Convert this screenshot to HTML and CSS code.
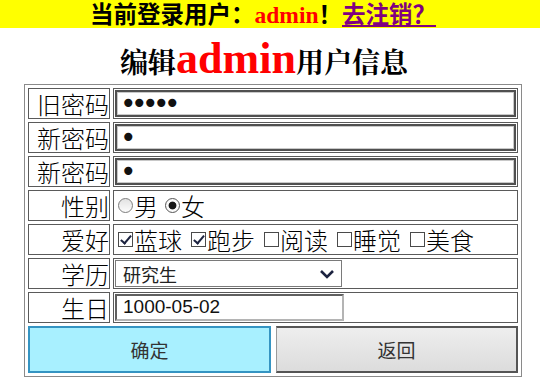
FILE: index.html
```html
<!DOCTYPE html>
<html lang="zh-CN">
<head>
    <meta charset="UTF-8">
    <title>编辑用户信息</title>
    <link rel="stylesheet" href="styles.css">
</head>
<body>
    <!-- 顶部登录信息 -->
    <div class="topbar">当前登录用户：<span class="user">admin</span>！<a href="#" class="logout">去注销？</a></div>

    <h2 class="title">编辑<span class="name">admin</span>用户信息</h2>

    <form class="edit-form" onsubmit="return false;">
        <table class="form-table">
            <tr>
                <td class="label">旧密码</td>
                <td class="field"><input type="password" class="text-box" value="12345"></td>
            </tr>
            <tr>
                <td class="label">新密码</td>
                <td class="field"><input type="password" class="text-box" value="1"></td>
            </tr>
            <tr>
                <td class="label">新密码</td>
                <td class="field"><input type="password" class="text-box" value="1"></td>
            </tr>
            <tr>
                <td class="label">性别</td>
                <td class="field">
                    <div class="choices gender">
                        <label class="opt"><input type="radio" name="sex" value="男">男</label>
                        <label class="opt"><input type="radio" name="sex" value="女" checked>女</label>
                    </div>
                </td>
            </tr>
            <tr>
                <td class="label">爱好</td>
                <td class="field">
                    <div class="choices">
                        <label class="opt"><input type="checkbox" checked>蓝球</label>
                        <label class="opt"><input type="checkbox" checked>跑步</label>
                        <label class="opt"><input type="checkbox">阅读</label>
                        <label class="opt"><input type="checkbox">睡觉</label>
                        <label class="opt"><input type="checkbox">美食</label>
                    </div>
                </td>
            </tr>
            <tr>
                <td class="label">学历</td>
                <td class="field">
                    <div class="select-wrap">
                        <select class="select-box">
                            <option>研究生</option>
                            <option>本科</option>
                            <option>专科</option>
                        </select>
                        <svg class="chevron" viewBox="0 0 16 10" width="16" height="10">
                            <polyline points="2,2 8,8 14,2" fill="none" stroke="#1c2340" stroke-width="2.6"/>
                        </svg>
                    </div>
                </td>
            </tr>
            <tr>
                <td class="label">生日</td>
                <td class="field"><input type="text" class="date-box" value="1000-05-02"></td>
            </tr>
            <tr>
                <td class="btn-cell" colspan="2">
                    <div class="btns">
                        <button type="submit" class="btn btn-ok">确定</button>
                        <button type="button" class="btn btn-back">返回</button>
                    </div>
                </td>
            </tr>
        </table>
    </form>
</body>
</html>
```

FILE: styles.css
```css
* { box-sizing: border-box; }
body { margin: 0; background: #fff; color: #000; font-family: "Noto Sans CJK SC", "Liberation Sans", sans-serif; }

/* Top bar */
.topbar { background: #ffff00; line-height: 27px; text-align: center; padding-right: 14px; font-size: 23.5px; font-weight: bold; white-space: nowrap; }
.topbar .user { color: #ff0000; font-family: "Liberation Serif", serif; line-height: 1; }
.topbar .logout { color: #800080; text-decoration: underline; line-height: 1; }

/* Title */
.title { margin: 0; height: 56px; padding: 9px 12px 0 0; text-align: center; font-family: "Noto Serif CJK SC", "Noto Sans CJK SC", serif; font-size: 28px; font-weight: bold; line-height: 47px; white-space: nowrap; }
.title .name { color: #ff0000; font-family: "Liberation Serif", serif; font-size: 44px; line-height: 1; }

/* Form table */
.form-table { margin-left: 24px; width: 498px; border: 1px solid #8a8a8a; border-spacing: 3px; border-collapse: separate; }
.form-table td { border: 1px solid #5a5a5a; padding: 1px; }
.form-table .label { width: 82px; padding: 0; text-align: right; font-size: 24px; font-weight: 300; line-height: 29px; white-space: nowrap; }

.text-box { display: block; width: 100%; height: 27px; margin: 0; padding: 0 3px; border: 2px solid #505050; box-shadow: inset 0 0 0 1px #c8c8c8; font-family: "DejaVu Sans", sans-serif; font-size: 28px; line-height: 23px; letter-spacing: -5.5px; color: #111; outline: none; }

/* Radio / checkbox rows */
.choices { display: flex; align-items: center; height: 27px; font-size: 24px; font-weight: 300; white-space: nowrap; }
.opt { display: inline-flex; align-items: center; margin-right: 6px; }
.gender .opt { margin-right: 4px; }
.opt input { appearance: none; -webkit-appearance: none; position: relative; flex: none; width: 15px; height: 15px; margin: 0 1px 0 3px; background: #fff; }
.opt input[type=radio] { border: 1px solid #7c7c7c; border-radius: 50%; background: linear-gradient(#e2e2e2, #fcfcfc); }
.opt input[type=radio]:checked { border-color: #555; background: radial-gradient(circle, #161616 0 3.5px, #fafafa 4.3px); }
.opt input[type=checkbox] { border: 1px solid #4a4a4a; }
.opt input[type=checkbox]:checked::after { content: ""; position: absolute; left: 4px; top: 0; width: 4px; height: 9px; border: solid #1c2340; border-width: 0 2.6px 2.6px 0; transform: rotate(40deg); }

/* Select */
.select-wrap { position: relative; width: 227px; height: 27px; }
.select-box { appearance: none; -webkit-appearance: none; display: block; width: 100%; height: 27px; margin: 0; padding: 0 0 0 7px; border: 1px solid #7a7a7a; border-radius: 0; background: #fff; font-family: "Noto Sans CJK SC", sans-serif; font-size: 18px; color: #222; }
.chevron { position: absolute; right: 7px; top: 9px; pointer-events: none; }

/* Date */
.date-box { display: block; width: 229px; height: 27px; margin: 0; padding: 0 6px; border: 2px inset #b4b4b4; font-family: "Liberation Sans", sans-serif; font-size: 19px; color: #111; outline: none; }

/* Buttons */
.form-table .btn-cell { border: none; padding: 0; }
.btns { display: flex; gap: 5px; }
.btn { flex: 1; height: 47px; margin: 0; font-family: "Noto Sans CJK SC", sans-serif; font-size: 19px; color: #333; cursor: pointer; }
.btn-ok { background: #a8f0ff; border: 2px solid #3594c2; }
.btn-back { background: linear-gradient(#eeeeee, #dcdcdc); border: 2px solid #555; border-left: 1px solid #9a9a9a; }
```
